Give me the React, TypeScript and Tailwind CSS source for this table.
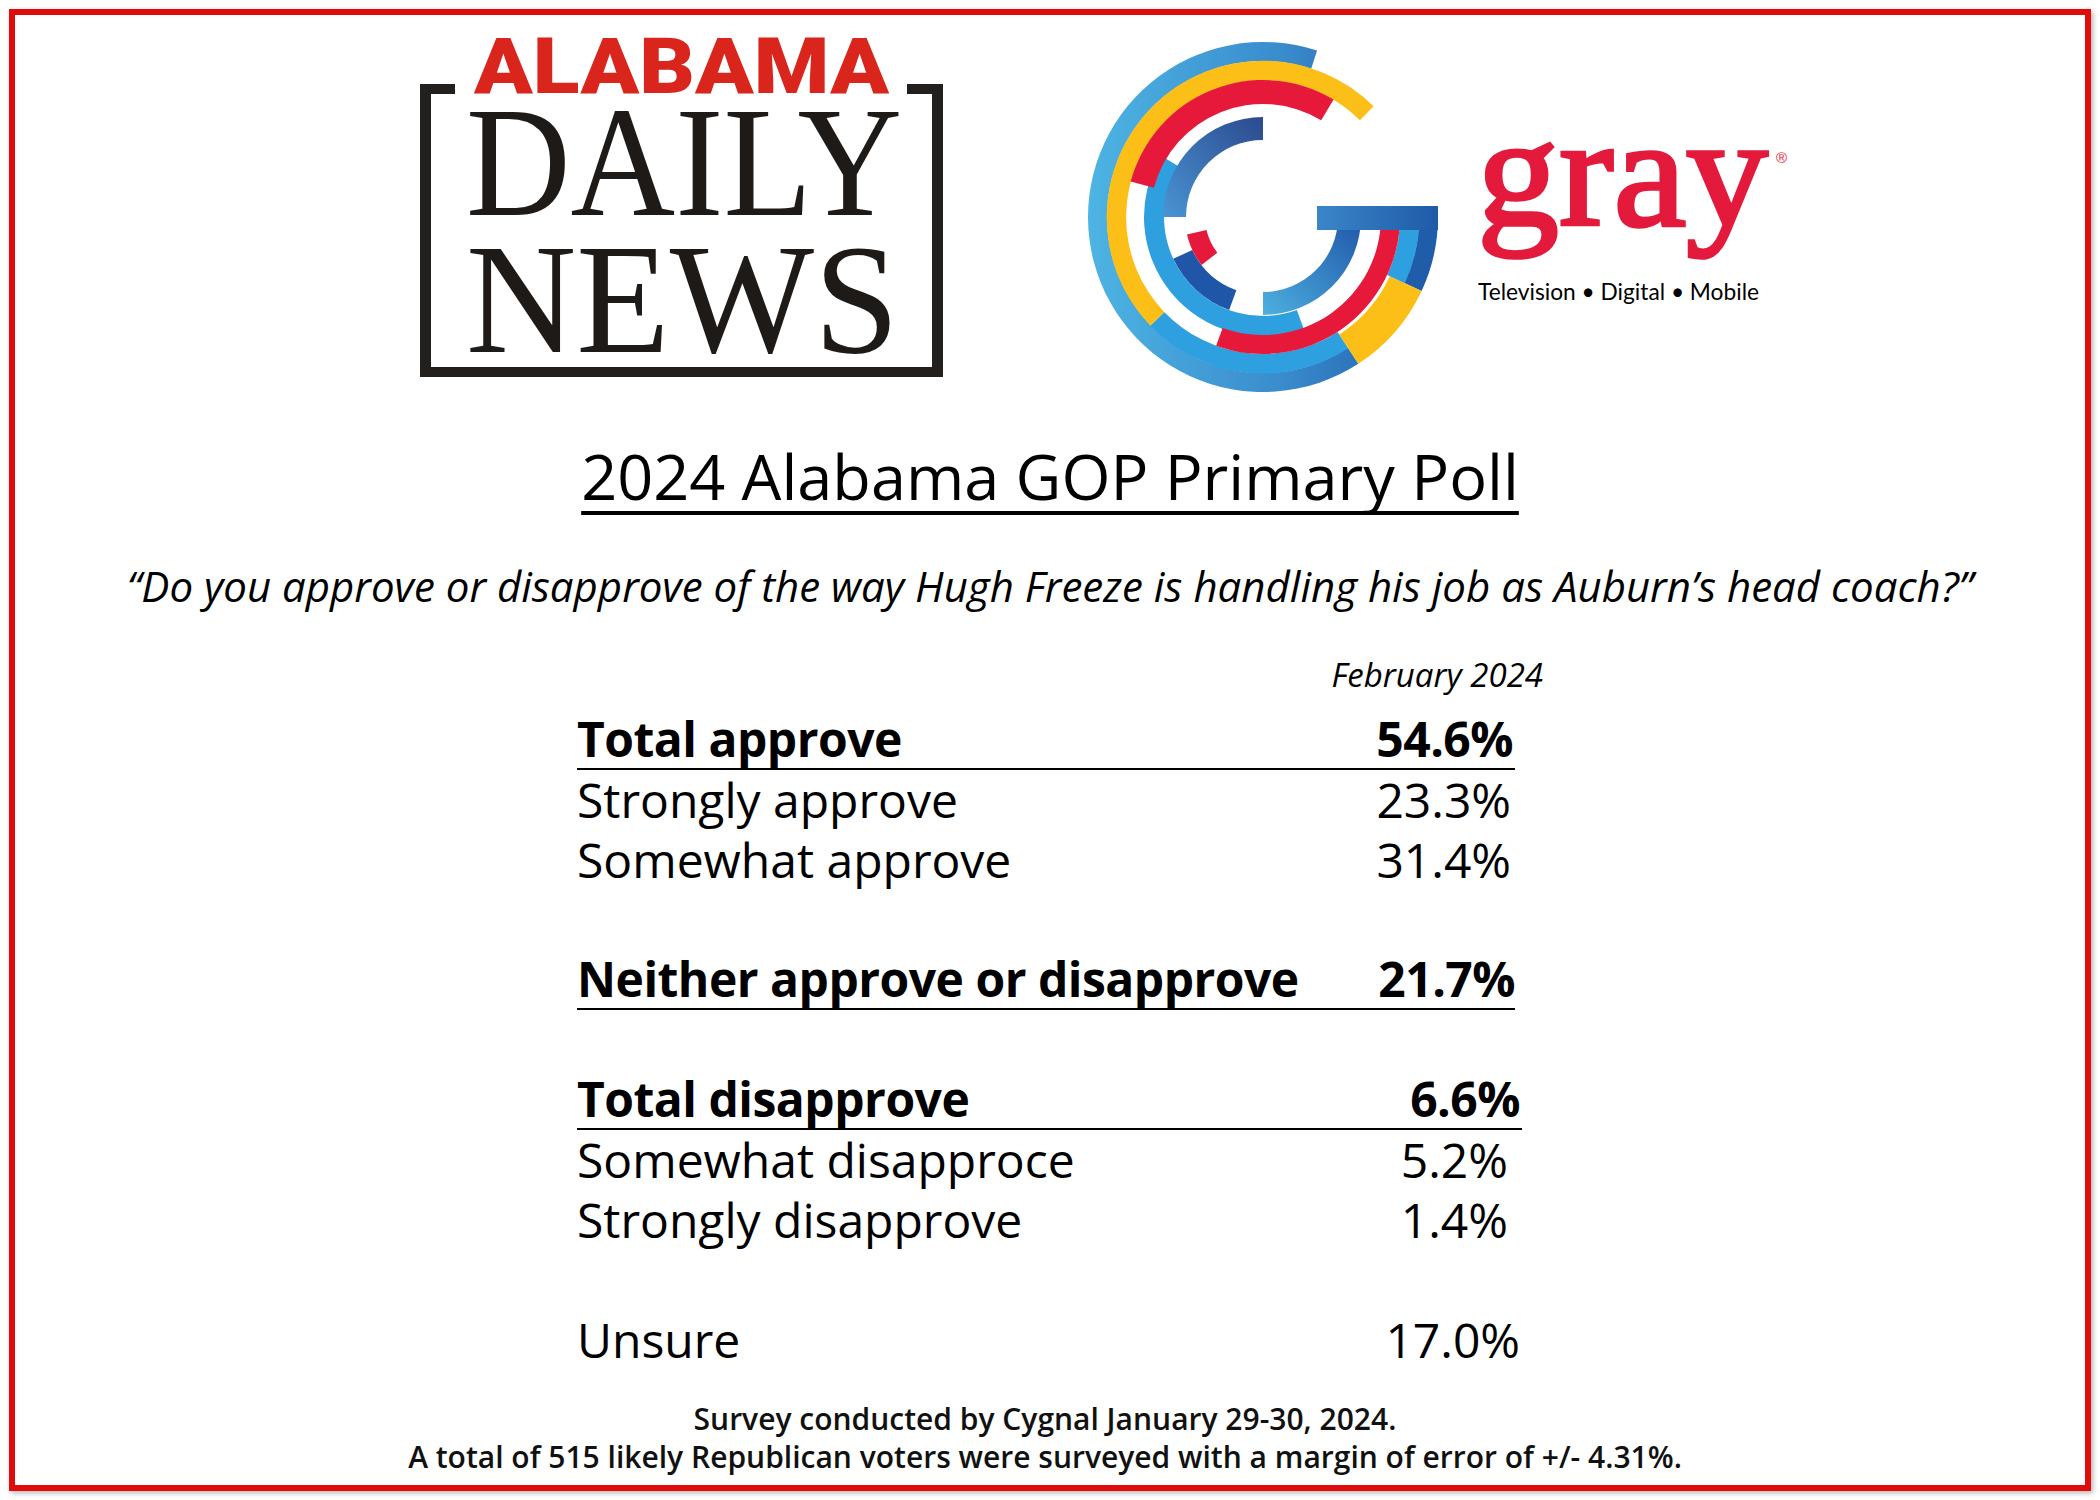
import React from "react";

type Piece = { r0: number; r1: number; a0: number; a1: number; fill: string };

// annular sector, angles in degrees, counter-clockwise with y up
function sector(cx: number, cy: number, p: Piece) {
  const rad = (a: number) => (a * Math.PI) / 180;
  const pt = (r: number, a: number) =>
    `${(cx + r * Math.cos(rad(a))).toFixed(2)} ${(cy - r * Math.sin(rad(a))).toFixed(2)}`;
  const large = p.a1 - p.a0 > 180 ? 1 : 0;
  return `M ${pt(p.r1, p.a0)} A ${p.r1} ${p.r1} 0 ${large} 0 ${pt(p.r1, p.a1)} L ${pt(
    p.r0,
    p.a1
  )} A ${p.r0} ${p.r0} 0 ${large} 1 ${pt(p.r0, p.a0)} Z`;
}

const gPieces: Piece[] = [
  { r0: 156, r1: 175, a0: 72, a1: 303, fill: "url(#gA)" },
  { r0: 156, r1: 175, a0: 335, a1: 360, fill: "#1f5ca9" },
  { r0: 137, r1: 156.5, a0: 45, a1: 224, fill: "#fcbf17" },
  { r0: 137, r1: 156.5, a0: 224, a1: 303, fill: "#2e9fdf" },
  { r0: 140, r1: 175, a0: 303, a1: 335, fill: "#fcbf17" },
  { r0: 137, r1: 156.5, a0: 335, a1: 360, fill: "#2e9fdf" },
  { r0: 99, r1: 119, a0: 149, a1: 290, fill: "#2e9fdf" },
  { r0: 113, r1: 137, a0: 59, a1: 165, fill: "#e6193a" },
  { r0: 118, r1: 137, a0: 250, a1: 360, fill: "#e6193a" },
  { r0: 77, r1: 100, a0: 90, a1: 180, fill: "url(#gF)" },
  { r0: 75, r1: 98, a0: 270, a1: 360, fill: "url(#gK)" },
  { r0: 78, r1: 99, a0: 205, a1: 250, fill: "#1f56a8" },
  { r0: 58, r1: 78, a0: 193, a1: 218, fill: "#e6193a" },
];

function DailyNewsLogo() {
  return (
    <svg width="534" height="345" viewBox="0 0 534 345" className="shrink-0 overflow-visible">
      <g fill="#231f1c">
        <rect x="4" y="49" width="11" height="293" />
        <rect x="516" y="49" width="11" height="293" />
        <rect x="4" y="332" width="523" height="10" />
        <rect x="4" y="49" width="35" height="10" />
        <rect x="491" y="49" width="36" height="10" />
      </g>
      <text
        x="58"
        y="58"
        textLength="415"
        lengthAdjust="spacingAndGlyphs"
        fill="#da251d"
        fontFamily="Roboto, 'Liberation Sans', sans-serif"
        fontWeight="900"
        fontSize="77"
      >
        ALABAMA
      </text>
      <text
        x="50"
        y="180"
        textLength="436"
        lengthAdjust="spacingAndGlyphs"
        fill="#1d1a17"
        fontFamily="'Liberation Serif', serif"
        fontSize="157"
      >
        DAILY
      </text>
      <text
        x="50"
        y="317"
        textLength="433"
        lengthAdjust="spacingAndGlyphs"
        fill="#1d1a17"
        fontFamily="'Liberation Serif', serif"
        fontSize="157"
      >
        NEWS
      </text>
    </svg>
  );
}

function GrayLogo() {
  const cx = 178;
  const cy = 177;
  return (
    <svg width="715" height="360" viewBox="0 0 715 360" className="shrink-0">
      <defs>
        <linearGradient id="gA" gradientUnits="userSpaceOnUse" x1="3" y1="0" x2="353" y2="0">
          <stop offset="0" stopColor="#4db4e3" />
          <stop offset="0.55" stopColor="#3a8ccd" />
          <stop offset="1" stopColor="#1f5aa8" />
        </linearGradient>
        <linearGradient id="gF" gradientUnits="userSpaceOnUse" x1="178" y1="80" x2="78" y2="177">
          <stop offset="0" stopColor="#2b4b8f" />
          <stop offset="1" stopColor="#4a94d3" />
        </linearGradient>
        <linearGradient id="gK" gradientUnits="userSpaceOnUse" x1="178" y1="275" x2="276" y2="177">
          <stop offset="0" stopColor="#4db0e0" />
          <stop offset="1" stopColor="#1f56a8" />
        </linearGradient>
        <linearGradient id="gBar" gradientUnits="userSpaceOnUse" x1="232" y1="0" x2="353" y2="0">
          <stop offset="0" stopColor="#3a86c8" />
          <stop offset="1" stopColor="#1f5aa8" />
        </linearGradient>
      </defs>
      {gPieces.map((p, i) => (
        <path key={i} d={sector(cx, cy, p)} fill={p.fill} />
      ))}
      <rect x="232" y="166" width="121" height="24" fill="url(#gBar)" />
      <text
        x="392"
        y="185"
        textLength="291"
        lengthAdjust="spacingAndGlyphs"
        fill="#e31a3c"
        stroke="#e31a3c"
        strokeWidth="3.5"
        fontFamily="'Liberation Serif', serif"
        fontSize="156"
      >
        gray
      </text>
      <text x="691" y="123" fill="#e31a3c" fontFamily="'Liberation Sans', sans-serif" fontSize="15">
        ®
      </text>
      <text
        x="393"
        y="260"
        textLength="281"
        lengthAdjust="spacingAndGlyphs"
        fill="#000"
        fontFamily="Lato, 'Open Sans', sans-serif"
        fontWeight="400"
        fontSize="23"
      >
        Television • Digital • Mobile
      </text>
    </svg>
  );
}

type Row = {
  label?: string;
  value?: string;
  bold?: boolean;
  rowCls?: string;
  valueCls?: string;
};

const rows: Row[] = [
  { label: "Total approve", value: "54.6%", bold: true, valueCls: "mr-[2px]" },
  { label: "Strongly approve", value: "23.3%", valueCls: "mr-[4px]" },
  { label: "Somewhat approve", value: "31.4%", valueCls: "mr-[4px]" },
  {},
  { label: "Neither approve or disapprove", value: "21.7%", bold: true },
  {},
  { label: "Total disapprove", value: "6.6%", bold: true, rowCls: "-mr-[7px]", valueCls: "mr-[2px]" },
  { label: "Somewhat disapproce", value: "5.2%", valueCls: "mr-[7px]" },
  { label: "Strongly disapprove", value: "1.4%", valueCls: "mr-[7px]" },
  {},
  { label: "Unsure", value: "17.0%", valueCls: "-mr-[5px]" },
];

export default function App() {
  return (
    <div className="w-[2100px] h-[1500px] bg-white p-[9px] font-['Open_Sans',sans-serif] text-black">
      <div className="h-full border-[6px] border-[#e00b0b] shadow-[2px_2px_5px_rgba(0,0,0,0.3)] overflow-hidden">
        <div className="flex items-start pt-[20px] pl-[401px]">
          <DailyNewsLogo />
          <div className="ml-[135px] mt-[5px]">
            <GrayLogo />
          </div>
        </div>

        <h1 className="mt-[38px] text-center text-[63px] leading-[76px] font-normal">
          <span className="underline decoration-[4px] underline-offset-[11px] [text-decoration-skip-ink:none]">
            2024 Alabama GOP Primary Poll
          </span>
        </h1>

        <p className="mt-[45px] text-center text-[42px] leading-[54px] italic">
          “Do you approve or disapprove of the way Hugh Freeze is handling his job as Auburn’s head coach?”
        </p>

        <div className="w-[938px] ml-[562px]">
          <div className="mt-[42px] h-[40px] -mr-[28px] text-right text-[33px] leading-[40px] italic">
            February 2024
          </div>

          <div className="mt-[15px]">
            {rows.map((row, i) =>
              row.label ? (
                <div
                  key={i}
                  className={`flex justify-between h-[60px] text-[48px] ${
                    row.bold
                      ? "font-bold tracking-[-0.5px] leading-[58px] border-b-2 border-black"
                      : "leading-[60px]"
                  } ${row.rowCls || ""}`}
                >
                  <span>{row.label}</span>
                  <span className={row.valueCls || ""}>{row.value}</span>
                </div>
              ) : (
                <div key={i} className="h-[60px]" />
              )
            )}
          </div>
        </div>

        <div className="mt-[30px] pr-[10px] text-center text-[30px] leading-[38px] font-semibold text-[#111]">
          <p>Survey conducted by Cygnal January 29-30, 2024.</p>
          <p>A total of 515 likely Republican voters were surveyed with a margin of error of +/- 4.31%.</p>
        </div>
      </div>
    </div>
  );
}
